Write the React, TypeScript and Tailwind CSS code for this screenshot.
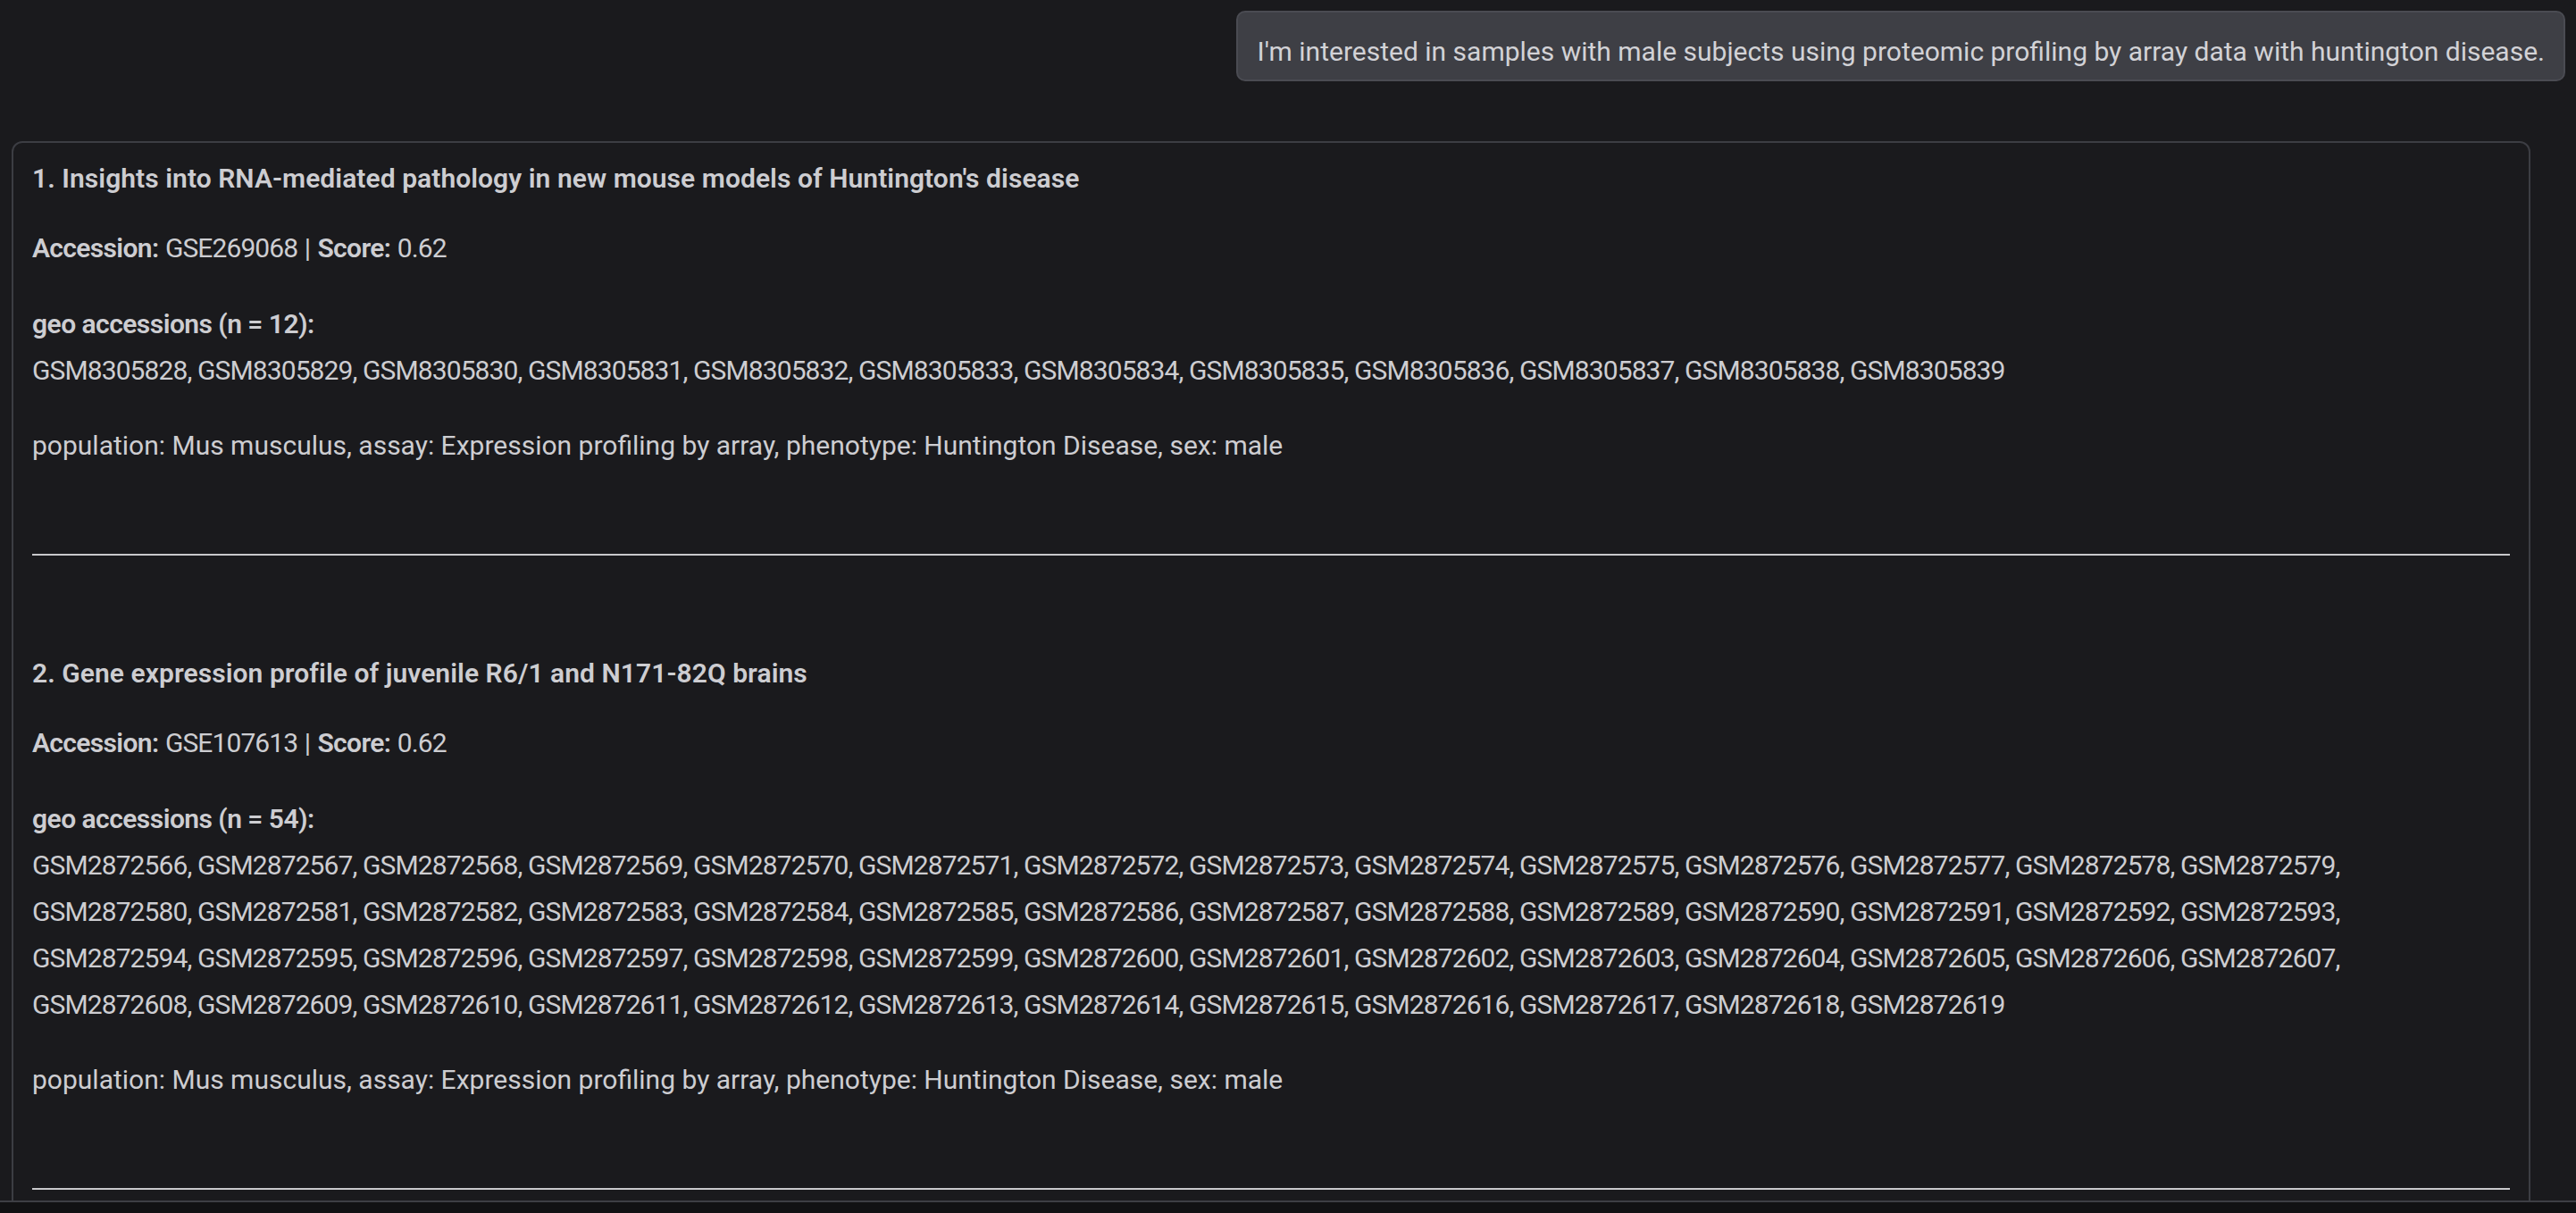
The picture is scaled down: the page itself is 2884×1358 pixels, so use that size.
import React from "react";

const range = (prefix: string, start: number, end: number) => {
  const out: string[] = [];
  for (let i = start; i <= end; i++) out.push(prefix + i);
  return out;
};

const sec1 = range("GSM", 8305828, 8305839);
const sec2 = range("GSM", 2872566, 2872619);
const sec2Rows = [sec2.slice(0, 14), sec2.slice(14, 28), sec2.slice(28, 42), sec2.slice(42)];

function Result({
  idx,
  title,
  accession,
  rows,
  n,
  first,
}: {
  idx: number;
  title: string;
  accession: string;
  rows: string[][];
  n: number;
  first?: boolean;
}) {
  return (
    <div className={first ? "" : "mt-[106px]"}>
      <p className="font-semibold tracking-[0.002em]">
        {idx}. {title}
      </p>
      <p className="mt-[26px]">
        <span className="font-semibold tracking-[-0.022em]">Accession:</span>{" "}
        <span className="tracking-[-0.03em]">{accession}</span> |{" "}
        <span className="font-semibold tracking-[-0.022em]">Score:</span>{" "}
        <span className="tracking-[-0.03em]">0.62</span>
      </p>
      <div className="mt-[33px]">
        <p className="font-semibold tracking-[-0.018em]">geo accessions (n = {n}):</p>
        {rows.map((r, i) => (
          <p key={i} className="whitespace-nowrap tracking-[-0.03em]">
            {r.join(", ")}
            {i < rows.length - 1 ? "," : ""}
          </p>
        ))}
      </div>
      <p className="mt-[32px] tracking-normal">
        population: Mus musculus, assay: Expression profiling by array, phenotype: Huntington Disease, sex: male
      </p>
      <div className="mt-[95px] h-[2px] bg-[#c8c8cb]" />
    </div>
  );
}

export default function App() {
  return (
    <div className="relative h-[1358px] w-full overflow-hidden bg-[#1a1a1d] font-['Roboto',sans-serif] text-[30px] leading-[52px] text-[#cdcdd1]">
      <div className="flex justify-end pt-[12px] pr-[12px]">
        <div className="rounded-[10px] border-2 border-[#4a4b52] bg-[#3e3f45] px-[21px] pt-[18px] pb-[6px] leading-[51px] tracking-normal text-[#d2d2d6]">
          I'm interested in samples with male subjects using proteomic profiling by array data with huntington disease.
        </div>
      </div>
      <div className="mt-[67px] ml-[13px] w-[2820px] rounded-[12px] border-2 border-[#3c3d43] px-[21px] pt-[14px] pb-[40px]">
        <Result
          idx={1}
          first
          title="Insights into RNA-mediated pathology in new mouse models of Huntington's disease"
          accession="GSE269068"
          rows={[sec1]}
          n={12}
        />
        <Result
          idx={2}
          title="Gene expression profile of juvenile R6/1 and N171-82Q brains"
          accession="GSE107613"
          rows={sec2Rows}
          n={54}
        />
      </div>
      <div className="absolute bottom-0 left-0 right-0 h-[14px] border-t-2 border-[#3d3e44] bg-[#111113]" />
    </div>
  );
}
